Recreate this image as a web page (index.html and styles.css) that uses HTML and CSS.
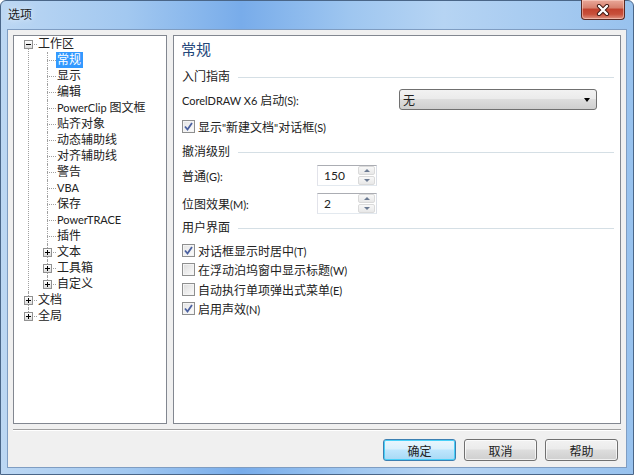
FILE: index.html
```html
<!DOCTYPE html>
<html lang="zh-CN">
<head>
    <meta charset="UTF-8">
    <title>选项</title>
    <link rel="stylesheet" href="styles.css">
</head>
<body>
<div class="window">
    <div class="titlebar">
        <span class="title">选项</span>
        <div class="close-btn">
            <svg width="14" height="12" viewBox="0 0 14 12"><path d="M3 2 L11 10 M11 2 L3 10" stroke="#3d1510" stroke-width="4.2" stroke-linecap="round"/><path d="M3 2 L11 10 M11 2 L3 10" stroke="#fff" stroke-width="2.4" stroke-linecap="round"/></svg>
        </div>
    </div>

    <div class="client">
        <div class="main">
            <!-- 左侧树 -->
            <div class="tree-box">
                <ul class="tree">
                    <li class="first"><span class="toggle open"></span><span class="label">工作区</span>
                        <ul>
                            <li><span class="label selected">常规</span></li>
                            <li><span class="label">显示</span></li>
                            <li><span class="label">编辑</span></li>
                            <li><span class="label"><span class="en">PowerClip </span>图文框</span></li>
                            <li><span class="label">贴齐对象</span></li>
                            <li><span class="label">动态辅助线</span></li>
                            <li><span class="label">对齐辅助线</span></li>
                            <li><span class="label">警告</span></li>
                            <li><span class="label en">VBA</span></li>
                            <li><span class="label">保存</span></li>
                            <li><span class="label en">PowerTRACE</span></li>
                            <li><span class="label">插件</span></li>
                            <li><span class="toggle"></span><span class="label">文本</span></li>
                            <li><span class="toggle"></span><span class="label">工具箱</span></li>
                            <li class="last"><span class="toggle"></span><span class="label">自定义</span></li>
                        </ul>
                    </li>
                    <li><span class="toggle"></span><span class="label">文档</span></li>
                    <li class="last"><span class="toggle"></span><span class="label">全局</span></li>
                </ul>
            </div>

            <!-- 右侧页面 -->
            <div class="page">
                <div class="page-title">常规</div>

                <div class="group-head g1"><span>入门指南</span></div>
                <div class="field-row select-row">
                    <span class="field-label wide"><span class="en">CorelDRAW X6 </span>启动<span class="en">(S):</span></span>
                    <div class="select"><span>无</span><i class="arrow"></i></div>
                </div>
                <div class="check-row c0">
                    <span class="checkbox checked"><svg width="9" height="9" viewBox="0 0 9 9"><path d="M1 4.5 L3.5 7.5 L8 1" fill="none" stroke="#4b61a0" stroke-width="1.8"/></svg></span>
                    <span>显示<span class="en">"</span>新建文档<span class="en">"</span>对话框<span class="en">(S)</span></span>
                </div>

                <div class="group-head g2"><span>撤消级别</span></div>
                <div class="field-row spin-row s1">
                    <span class="field-label">普通<span class="en">(G):</span></span>
                    <div class="spin"><span class="spin-val en">150</span><div class="spin-btns"><b class="up"></b><b class="down"></b></div></div>
                </div>
                <div class="field-row spin-row s2">
                    <span class="field-label">位图效果<span class="en">(M):</span></span>
                    <div class="spin"><span class="spin-val en">2</span><div class="spin-btns"><b class="up"></b><b class="down"></b></div></div>
                </div>

                <div class="group-head g3"><span>用户界面</span></div>
                <div class="check-row c1">
                    <span class="checkbox checked"><svg width="9" height="9" viewBox="0 0 9 9"><path d="M1 4.5 L3.5 7.5 L8 1" fill="none" stroke="#4b61a0" stroke-width="1.8"/></svg></span>
                    <span>对话框显示时居中<span class="en">(T)</span></span>
                </div>
                <div class="check-row c2">
                    <span class="checkbox"></span>
                    <span>在浮动泊坞窗中显示标题<span class="en">(W)</span></span>
                </div>
                <div class="check-row c3">
                    <span class="checkbox"></span>
                    <span>自动执行单项弹出式菜单<span class="en">(E)</span></span>
                </div>
                <div class="check-row c4">
                    <span class="checkbox checked"><svg width="9" height="9" viewBox="0 0 9 9"><path d="M1 4.5 L3.5 7.5 L8 1" fill="none" stroke="#4b61a0" stroke-width="1.8"/></svg></span>
                    <span>启用声效<span class="en">(N)</span></span>
                </div>
            </div>
        </div>

        <div class="separator"></div>

        <div class="buttons">
            <button class="btn default">确定</button>
            <button class="btn">取消</button>
            <button class="btn">帮助</button>
        </div>
    </div>
</div>
</body>
</html>
```

FILE: styles.css
```css
* {
    box-sizing: border-box;
}
body {
    margin: 0;
    padding: 0;
    font-family: Lato, "Noto Sans CJK SC", sans-serif;
    font-size: 12px;
    color: #222;
    background: #fff;
}
/* 英文部分稍小，接近 Segoe UI 的宽度 */
.en {
    font-size: 11px;
}
.window {
    width: 634px;
    height: 475px;
    border: 1px solid #4a6688;
    border-radius: 6px 6px 0 0;
    background: linear-gradient(90deg, #bcd7f3 0%, #a2c8f0 20%, #78acea 38%, #9ec6f0 55%, #b6d4f3 70%, #98c2ee 100%);
    display: flex;
    flex-direction: column;
}
.titlebar {
    height: 28px;
    display: flex;
    align-items: flex-start;
}
.title {
    padding: 6px 0 0 7px;
    line-height: 16px;
    font-size: 12px;
    color: #1a1a1a;
    text-shadow: 0 0 6px rgba(255, 255, 255, 0.9);
}
.close-btn {
    margin: -1px 8px 0 auto;
    width: 44px;
    height: 20px;
    border: 1px solid #5a2a24;
    border-top: none;
    border-radius: 0 0 4px 4px;
    background: linear-gradient(#e9a899 0%, #d7816f 40%, #c2432f 50%, #c8503b 75%, #e09382 100%);
    box-shadow: inset 0 0 0 1px rgba(255, 220, 210, 0.5);
    display: flex;
    align-items: center;
    justify-content: center;
}
.client {
    flex: 1;
    margin: 0 6px 6px 6px;
    border: 1px solid #7f9dc2;
    background: #f0f0f0;
    padding: 5px 5px 6px 5px;
    display: flex;
    flex-direction: column;
}
.main {
    height: 389px;
    display: flex;
    gap: 6px;
}

/* 树 */
.tree-box {
    width: 154px;
    background: #fff;
    border: 1px solid #828790;
    overflow: hidden;
}
.tree, .tree ul {
    list-style: none;
    margin: 0;
    padding: 0;
}
.tree ul {
    margin-left: -5px;
}
.tree li {
    position: relative;
    padding-left: 24px;
    line-height: 16px;
    white-space: nowrap;
}
.tree li::before {
    content: "";
    position: absolute;
    left: 14px;
    top: 8px;
    width: 9px;
    border-top: 1px dotted #a0a0a0;
}
.tree li::after {
    content: "";
    position: absolute;
    left: 14px;
    top: 0;
    bottom: 0;
    border-left: 1px dotted #a0a0a0;
}
.tree li.first::after {
    top: 8px;
}
.tree li.last::after {
    bottom: auto;
    height: 8px;
}
.tree .label {
    display: inline-block;
    padding: 0 2px 0 1px;
    margin-left: -1px;
    height: 16px;
}
.tree .label.selected {
    background: #3399ff;
    color: #fff;
}
.toggle {
    position: absolute;
    z-index: 1;
    left: 10px;
    top: 4px;
    width: 9px;
    height: 9px;
    border: 1px solid #919191;
    background: linear-gradient(#fff, #dcdcdc);
}
.toggle::before {
    content: "";
    position: absolute;
    left: 1px;
    top: 3px;
    width: 5px;
    height: 1px;
    background: #000;
}
.toggle::after {
    content: "";
    position: absolute;
    left: 3px;
    top: 1px;
    width: 1px;
    height: 5px;
    background: #000;
}
.toggle.open::after {
    display: none;
}

/* 右侧页面 */
.page {
    flex: 1;
    background: #fff;
    border: 1px solid #828790;
    padding: 3px 6px 0 8px;
}
.page-title {
    font-size: 15px;
    line-height: 20px;
    color: #24467a;
    margin-left: -1px;
}
.group-head {
    display: flex;
    align-items: center;
    line-height: 16px;
    height: 16px;
}
.group-head::after {
    content: "";
    flex: 1;
    margin-left: 8px;
    border-top: 1px solid #d5dfe5;
}
.g1 { margin-top: 10px; }
.g2 { margin-top: 10px; }
.g3 { margin-top: 6px; }
.field-row {
    display: flex;
    align-items: center;
    height: 21px;
}
.field-label {
    width: 135px;
}
.field-label.wide {
    width: 217px;
}
.select-row { margin-top: 4px; }
.s1 { margin-top: 5px; }
.s2 { margin-top: 7px; }
.select {
    width: 198px;
    height: 21px;
    border: 1px solid #707070;
    border-radius: 3px;
    background: linear-gradient(#f2f2f2 0%, #ebebeb 45%, #dddddd 50%, #cfcfcf 100%);
    display: flex;
    align-items: center;
    padding: 0 6px 0 3px;
}
.select .arrow {
    margin-left: auto;
    width: 0;
    height: 0;
    border-left: 3.5px solid transparent;
    border-right: 3.5px solid transparent;
    border-top: 4px solid #000;
}
.spin {
    width: 60px;
    height: 21px;
    border: 1px solid #abadb3;
    border-left-color: #e2e3ea;
    border-right-color: #dbdfe6;
    border-bottom-color: #e3e9ef;
    display: flex;
    align-items: center;
}
.spin-val {
    flex: 1;
    padding-left: 6px;
    font-size: 12px;
}
.spin-btns {
    width: 17px;
    height: 19px;
    margin-right: 1px;
    display: flex;
    flex-direction: column;
    gap: 1px;
}
.spin-btns b {
    flex: 1;
    border: 1px solid #dadada;
    border-radius: 2px;
    background: linear-gradient(#f8f8f8, #e8e8e8);
    display: flex;
    align-items: center;
    justify-content: center;
}
.spin-btns b::before {
    content: "";
    width: 0;
    height: 0;
    border-left: 3px solid transparent;
    border-right: 3px solid transparent;
}
.spin-btns .up::before {
    border-bottom: 3px solid #6b7a92;
}
.spin-btns .down::before {
    border-top: 3px solid #6b7a92;
}
.check-row {
    display: flex;
    align-items: center;
    gap: 3px;
    height: 16px;
}
.c0 { margin-top: 8px; }
.c1 { margin-top: 6px; }
.c2 { margin-top: 3px; }
.c3 { margin-top: 4px; }
.c4 { margin-top: 3px; }
.checkbox {
    width: 13px;
    height: 13px;
    border: 1px solid #8e8f8f;
    background: linear-gradient(135deg, #dcdcdc, #fbfbfb);
    box-shadow: inset 0 0 0 1px #f4f4f4;
    display: flex;
    align-items: center;
    justify-content: center;
}
.checkbox.checked {
    background: linear-gradient(135deg, #e4e4e4, #fdfdfd);
}

/* 底部按钮 */
.separator {
    margin-top: 5px;
    height: 2px;
    border-top: 1px solid #a0a0a0;
    border-bottom: 1px solid #fff;
}
.buttons {
    margin-top: 8px;
    display: flex;
    justify-content: flex-end;
    gap: 8px;
    padding-right: 3px;
}
.btn {
    width: 73px;
    height: 22px;
    font-family: Lato, "Noto Sans CJK SC", sans-serif;
    font-size: 12px;
    border: 1px solid #707070;
    border-radius: 3px;
    background: linear-gradient(#f2f2f2 0%, #ebebeb 45%, #dddddd 50%, #cfcfcf 100%);
    box-shadow: inset 0 0 0 1px rgba(255, 255, 255, 0.7);
    padding: 0;
    color: #222;
}
.btn.default {
    border-color: #3c7fb1;
    background: linear-gradient(#eaf6fd 0%, #d9f0fc 45%, #bee6fd 50%, #a7d9f5 100%);
    box-shadow: inset 0 0 0 1px #48d0f8;
}
```
